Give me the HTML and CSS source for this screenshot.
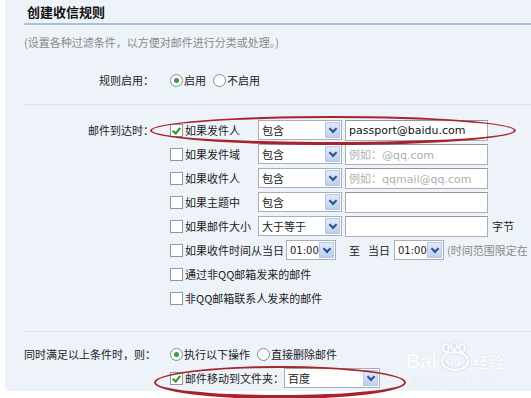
FILE: index.html
```html
<!DOCTYPE html>
<html lang="zh-CN">
    <head>
        <meta charset="UTF-8">
        <title>创建收信规则</title>
        <link rel="stylesheet" href="styles.css">
    </head>
    <body>
        <div class="page">
            <div class="panel">
                <h2 class="title">创建收信规则</h2>
                <p class="desc">(设置各种过滤条件，以方便对邮件进行分类或处理。)</p>

                <div class="section enable">
                    <div class="form-row">
                        <span class="label">规则启用：</span>
                        <div class="field">
                            <span class="radio on"></span><span class="opt">启用</span>
                            <span class="radio"></span><span class="opt">不启用</span>
                        </div>
                    </div>
                </div>

                <div class="section conds">
                    <div class="form-row">
                        <span class="label">邮件到达时：</span>
                        <div class="field">
                            <span class="check"><span class="cb on"></span>如果发件人</span>
                            <span class="select"><span>包含</span><span class="arrow"></span></span>
                            <span class="text latin">passport@baidu.com</span>
                        </div>
                    </div>
                    <div class="form-row">
                        <span class="label"></span>
                        <div class="field">
                            <span class="check"><span class="cb"></span>如果发件域</span>
                            <span class="select"><span>包含</span><span class="arrow"></span></span>
                            <span class="text hint">例如：<span class="latin">@qq.com</span></span>
                        </div>
                    </div>
                    <div class="form-row">
                        <span class="label"></span>
                        <div class="field">
                            <span class="check"><span class="cb"></span>如果收件人</span>
                            <span class="select"><span>包含</span><span class="arrow"></span></span>
                            <span class="text hint">例如：<span class="latin">qqmail@qq.com</span></span>
                        </div>
                    </div>
                    <div class="form-row">
                        <span class="label"></span>
                        <div class="field">
                            <span class="check"><span class="cb"></span>如果主题中</span>
                            <span class="select"><span>包含</span><span class="arrow"></span></span>
                            <span class="text"></span>
                        </div>
                    </div>
                    <div class="form-row">
                        <span class="label"></span>
                        <div class="field">
                            <span class="check"><span class="cb"></span>如果邮件大小</span>
                            <span class="select"><span>大于等于</span><span class="arrow"></span></span>
                            <span class="text"></span>
                            <span class="unit">字节</span>
                        </div>
                    </div>
                    <div class="form-row">
                        <span class="label"></span>
                        <div class="field">
                            <span class="cb"></span><span>如果收件时间从当日</span>
                            <span class="select time"><span class="latin small">01:00</span><span class="arrow"></span></span>
                            <span class="to">至</span>
                            <span class="day">当日</span>
                            <span class="select time second"><span class="latin small">01:00</span><span class="arrow"></span></span>
                            <span class="note">(时间范围限定在</span>
                        </div>
                    </div>
                    <div class="form-row">
                        <span class="label"></span>
                        <div class="field">
                            <span class="cb"></span><span>通过非QQ邮箱发来的邮件</span>
                        </div>
                    </div>
                    <div class="form-row">
                        <span class="label"></span>
                        <div class="field">
                            <span class="cb"></span><span>非QQ邮箱联系人发来的邮件</span>
                        </div>
                    </div>
                </div>

                <div class="section actions">
                    <div class="form-row">
                        <span class="label">同时满足以上条件时，则：</span>
                        <div class="field">
                            <span class="radio on"></span><span class="opt">执行以下操作</span>
                            <span class="radio"></span><span class="opt">直接删除邮件</span>
                        </div>
                    </div>
                    <div class="form-row">
                        <span class="label"></span>
                        <div class="field">
                            <span class="cb on"></span><span>邮件移动到文件夹：</span>
                            <span class="select folder"><span>百度</span><span class="arrow"></span></span>
                        </div>
                    </div>
                </div>
            </div>

            <!-- red marks drawn over the screenshot -->
            <div class="mark mark-sender"></div>
            <div class="mark mark-folder"></div>

            <div class="watermark">
                <div class="wm-logo">
                    <span class="wm-bai">Bai</span>
                    <span class="wm-paw">
                        <svg width="36" height="30" viewBox="0 0 36 30">
                            <g fill="none" stroke="#fff" stroke-width="2">
                                <ellipse cx="9" cy="6" rx="3" ry="4"/>
                                <ellipse cx="17" cy="4" rx="3" ry="4"/>
                                <ellipse cx="25" cy="6" rx="3" ry="4"/>
                                <ellipse cx="18" cy="19" rx="13" ry="9"/>
                            </g>
                        </svg>
                        <span class="wm-du">du</span>
                    </span>
                    <span class="wm-jy">经验</span>
                </div>
                <div class="wm-url">jingyan.baidu.com</div>
            </div>
        </div>
    </body>
</html>
```

FILE: styles.css
```css
body
{
    margin: 0;
    background-color: #ffffff;
    color: #222222;
    font-family: "Noto Sans CJK SC", "Liberation Sans", sans-serif;
    font-size: 11px;
}

.page
{
    position: relative;
    width: 531px;
    height: 398px;
    overflow: hidden;
    padding-left: 5px;
    box-sizing: border-box;
}

.panel
{
    background-color: #eef3fa;
    height: 391px;
    padding-left: 19px;
}

.title
{
    margin: 0;
    padding-left: 3px;
    height: 23px;
    line-height: 24px;
    font-size: 13px;
    font-weight: bold;
    color: #111111;
    border-bottom: 2px solid #a9bfdc;
}

.desc
{
    margin: 8px 0 0;
    line-height: 18px;
    color: #8a8a8a;
}

.form-row
{
    display: grid;
    grid-template-columns: 132px 1fr;
    column-gap: 14px;
    height: 24px;
    align-items: center;
}

.label
{
    text-align: right;
    white-space: nowrap;
    margin-right: 2px;
}

.field
{
    display: flex;
    align-items: center;
    white-space: nowrap;
}

.enable
{
    margin-top: 17px;
    padding-bottom: 12px;
    border-bottom: 1px solid #d9e2ee;
}

.conds
{
    padding-top: 13px;
    padding-bottom: 21px;
    border-bottom: 1px solid #d9e2ee;
}

.actions
{
    padding-top: 10px;
}

/* radios and checkboxes */
.radio
{
    width: 11px;
    height: 11px;
    border: 1px solid #7d8c9c;
    border-radius: 50%;
    background-color: #ffffff;
    margin-right: 1px;
    position: relative;
}
.radio.on::after
{
    content: "";
    position: absolute;
    left: 3px;
    top: 3px;
    width: 5px;
    height: 5px;
    border-radius: 50%;
    background-color: #3f9a3f;
}
.opt
{
    margin-right: 7px;
}

.cb
{
    width: 11px;
    height: 11px;
    border: 1px solid #8d99a6;
    background-color: #ffffff;
    margin-right: 2px;
    flex-shrink: 0;
    position: relative;
}
.cb.on::after
{
    content: "";
    position: absolute;
    left: 3px;
    top: 1px;
    width: 3px;
    height: 6px;
    border-right: 2px solid #27952b;
    border-bottom: 2px solid #27952b;
    transform: rotate(40deg);
}

.check
{
    display: flex;
    align-items: center;
    width: 88px;
}

/* fake select boxes */
.select
{
    display: inline-flex;
    align-items: center;
    justify-content: space-between;
    box-sizing: border-box;
    width: 84px;
    height: 20px;
    padding-left: 3px;
    border: 1px solid #a9afb6;
    background-color: #ffffff;
}
.arrow
{
    width: 15px;
    height: 16px;
    margin-right: 1px;
    box-sizing: border-box;
    border: 1px solid #b7c9e6;
    background: linear-gradient(#e2ebf9, #bccfee);
    position: relative;
}
.arrow::after
{
    content: "";
    position: absolute;
    left: 4px;
    top: 3px;
    width: 4px;
    height: 4px;
    border-right: 2px solid #2d4f8e;
    border-bottom: 2px solid #2d4f8e;
    transform: rotate(45deg);
}

.select.time
{
    width: 50px;
    margin-left: 2px;
}
.select.time.second
{
    margin-left: 4px;
}
.select.folder
{
    width: 96px;
}

.text
{
    box-sizing: border-box;
    width: 143px;
    height: 21px;
    margin-left: 3px;
    padding-left: 3px;
    line-height: 19px;
    border: 1px solid #a9afb6;
    border-top-color: #8f959c;
    background-color: #ffffff;
}
.latin
{
    font-family: "DejaVu Sans", sans-serif;
    font-size: 11px;
}
.latin.small
{
    font-size: 10px;
}
.text.latin
{
    font-size: 11px;
    color: #111111;
}
.hint
{
    color: #b0b0b0;
}

.unit
{
    margin-left: 4px;
}
.to
{
    margin-left: 13px;
}
.day
{
    margin-left: 8px;
}
.note
{
    margin-left: 3px;
    color: #8a8a8a;
}

/* hand drawn red ellipses */
.mark
{
    position: absolute;
    border: 2px solid #a8242c;
    border-radius: 50%;
}
.mark-sender
{
    left: 150px;
    top: 116px;
    width: 362px;
    height: 24px;
    border-bottom-width: 3px;
}
.mark-folder
{
    left: 154px;
    top: 366px;
    width: 248px;
    height: 27px;
    border-bottom-width: 4px;
}

/* watermark */
.watermark
{
    position: absolute;
    left: 406px;
    top: 340px;
    color: #ffffff;
    opacity: 0.85;
}
.wm-logo
{
    display: flex;
    align-items: flex-end;
    height: 32px;
}
.wm-bai
{
    font-family: "Liberation Sans", sans-serif;
    font-weight: bold;
    font-size: 20px;
    line-height: 22px;
    text-shadow: 0 0 1px #b8c4d2;
}
.wm-paw
{
    position: relative;
    width: 36px;
    height: 30px;
}
.wm-paw svg
{
    filter: drop-shadow(0 0 1px #b8c4d2);
}
.wm-du
{
    position: absolute;
    left: 9px;
    top: 12px;
    font-family: "Liberation Sans", sans-serif;
    font-weight: bold;
    font-size: 12px;
    text-shadow: 0 0 1px #b8c4d2;
}
.wm-jy
{
    font-size: 15px;
    line-height: 20px;
    font-weight: bold;
    text-shadow: 0 0 1px #b8c4d2;
}
.wm-url
{
    margin-top: 4px;
    margin-left: 6px;
    font-family: "Liberation Sans", sans-serif;
    font-size: 10px;
    letter-spacing: 0.5px;
    text-shadow: 0 0 1px #b8c4d2;
}
```
